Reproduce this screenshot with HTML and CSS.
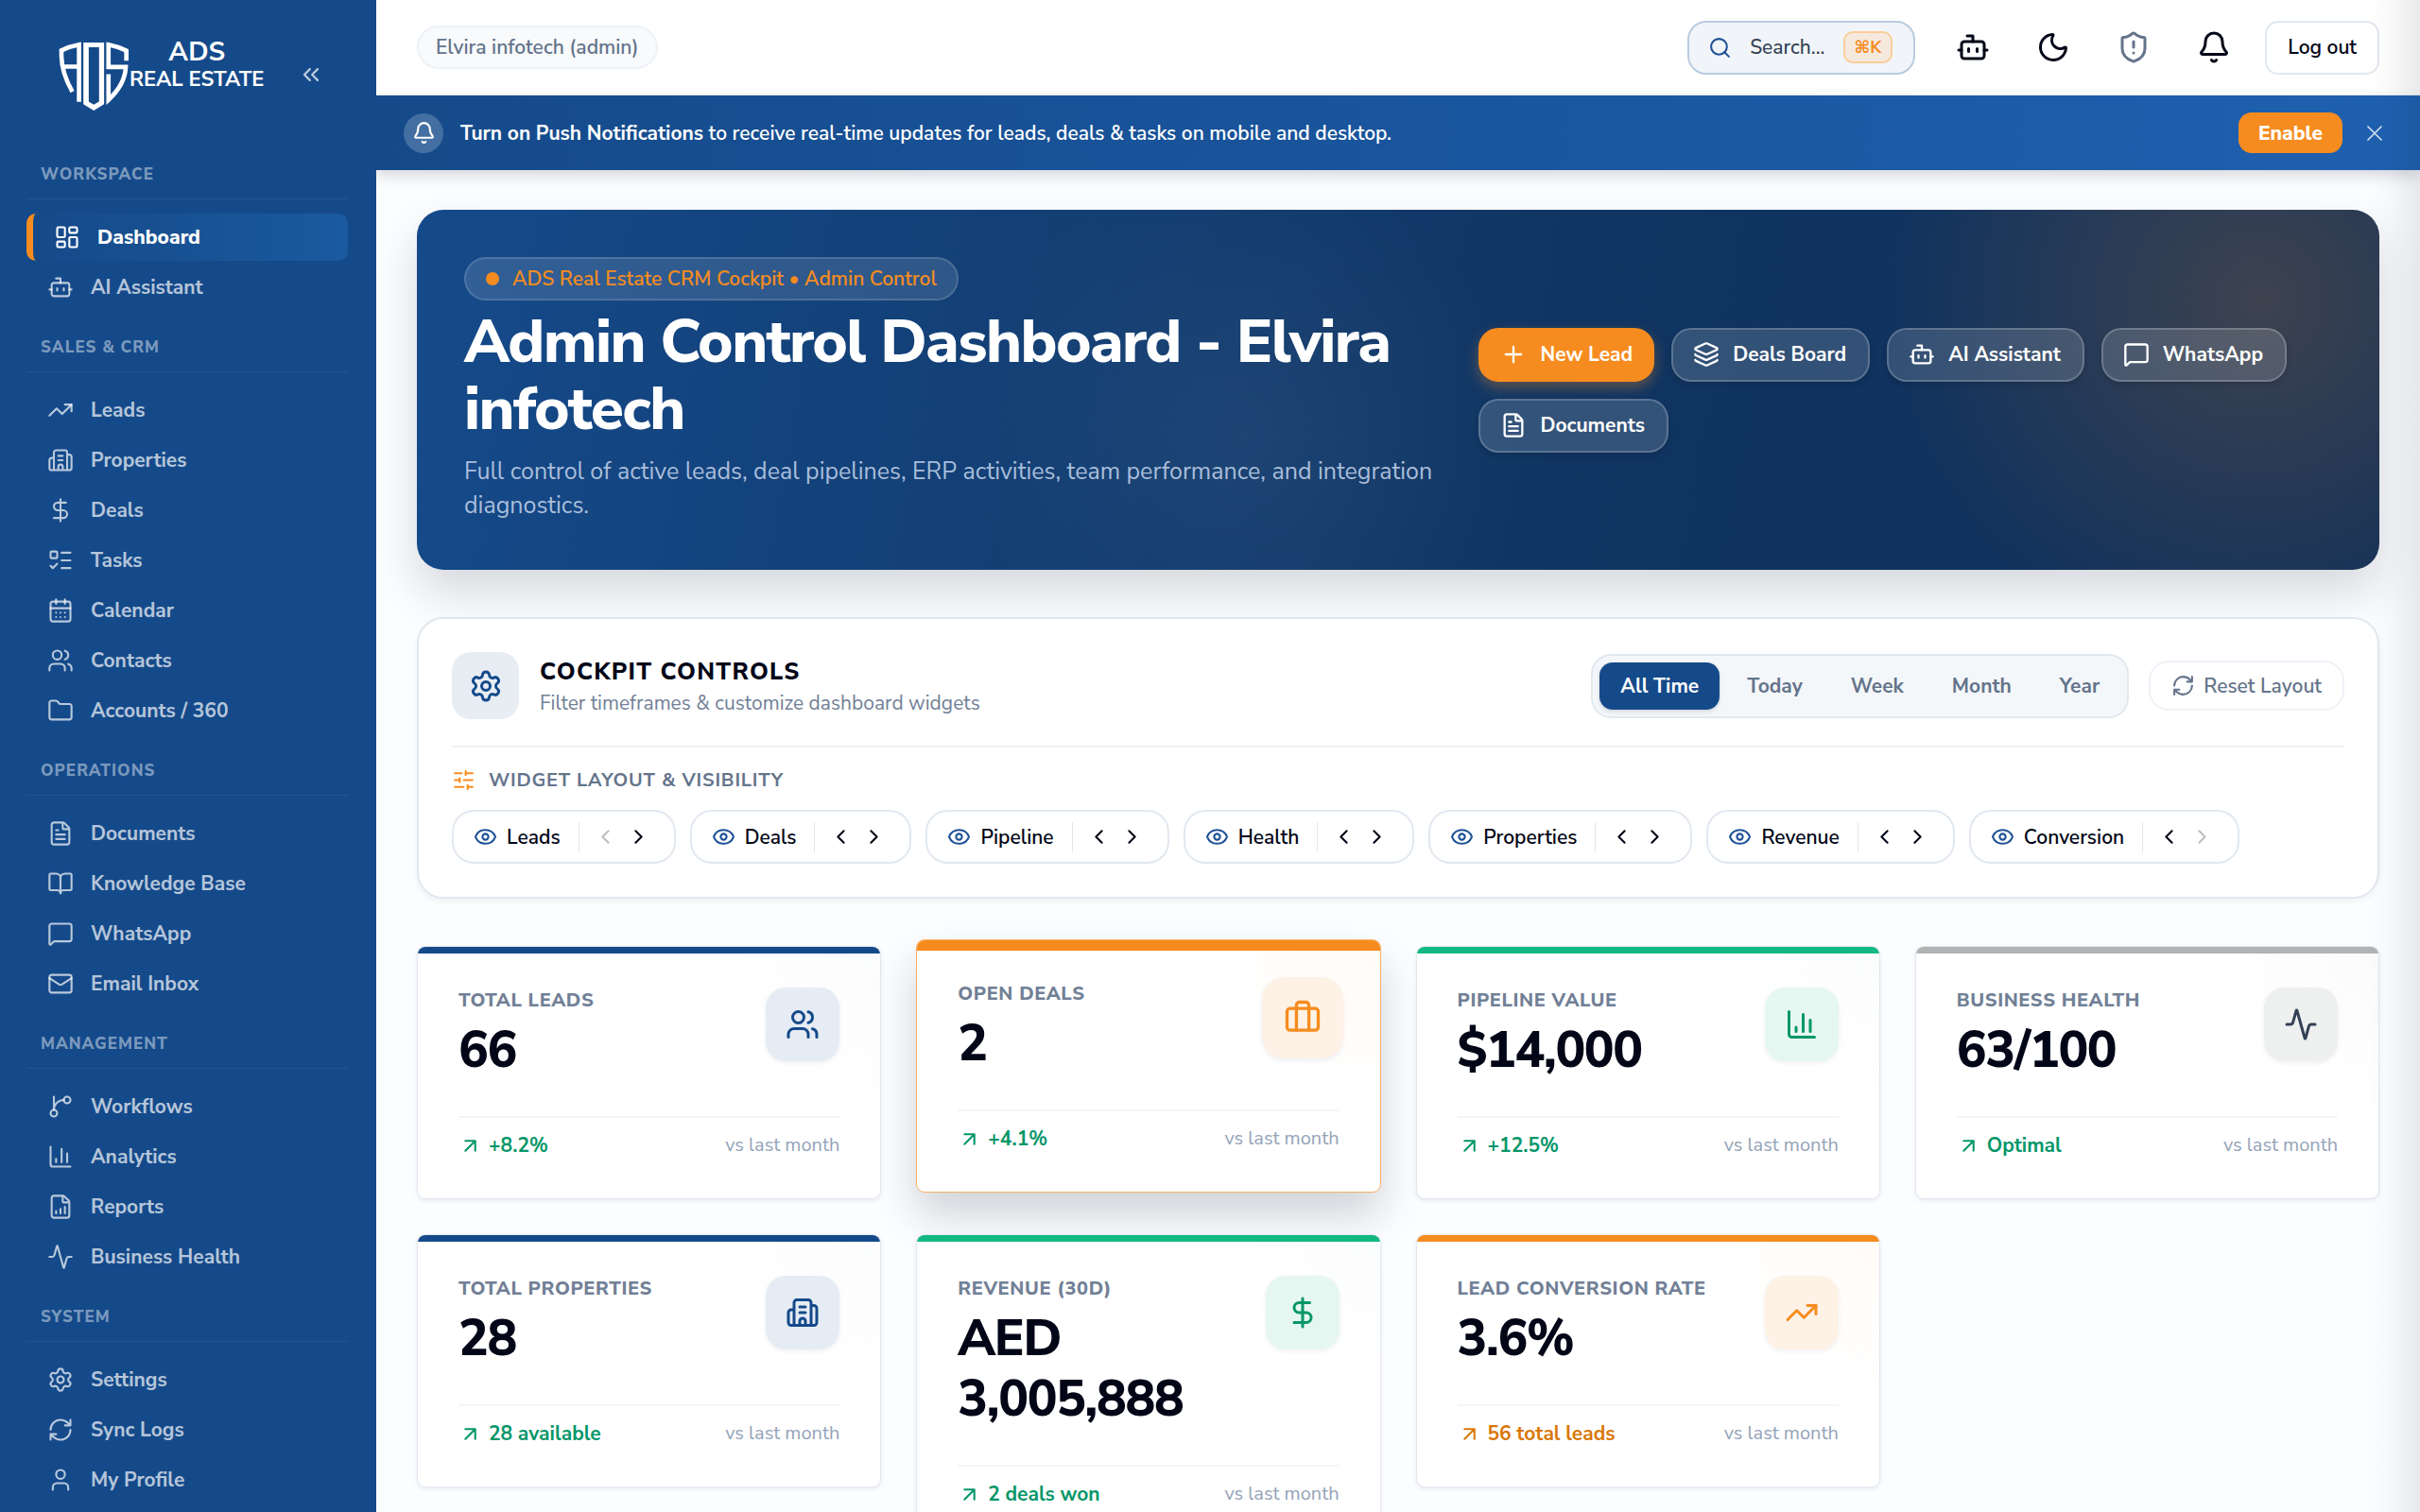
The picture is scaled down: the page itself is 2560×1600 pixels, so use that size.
FILE: index.html
```html
<!DOCTYPE html>
<html lang="en">
<head>
<meta charset="utf-8">
<meta name="viewport" content="width=device-width, initial-scale=1">
<title>ADS Real Estate CRM</title>
<link rel="stylesheet" href="styles.css">
</head>
<body>
<svg class="sprite" aria-hidden="true">
  <symbol id="i-dashboard" viewBox="0 0 24 24"><rect width="7" height="9" x="3" y="3" rx="1"/><rect width="7" height="5" x="14" y="3" rx="1"/><rect width="7" height="9" x="14" y="12" rx="1"/><rect width="7" height="5" x="3" y="16" rx="1"/></symbol>
  <symbol id="i-bot" viewBox="0 0 24 24"><path d="M12 8V4H8M2 14h2M20 14h2M15 13v2M9 13v2"/><rect width="16" height="12" x="4" y="8" rx="2"/></symbol>
  <symbol id="i-trend" viewBox="0 0 24 24"><path d="M16 7h6v6"/><path d="m22 7-8.5 8.5-5-5L2 17"/></symbol>
  <symbol id="i-building" viewBox="0 0 24 24"><path d="M10 12h4M10 8h4M14 21v-3a2 2 0 0 0-4 0v3M6 10H4a2 2 0 0 0-2 2v7a2 2 0 0 0 2 2h16a2 2 0 0 0 2-2V9a2 2 0 0 0-2-2h-2M6 21V5a2 2 0 0 1 2-2h8a2 2 0 0 1 2 2v16"/></symbol>
  <symbol id="i-dollar" viewBox="0 0 24 24"><path d="M12 2v20M17 5H9.500a3.500 3.500 0 0 0 0 7h5a3.500 3.500 0 0 1 0 7H6"/></symbol>
  <symbol id="i-tasks" viewBox="0 0 24 24"><rect x="3" y="4" width="6" height="6" rx="1"/><path d="m3 17 2 2 4-4M13 5h8M13 12h8M13 19h8"/></symbol>
  <symbol id="i-calendar" viewBox="0 0 24 24"><path d="M8 2v4M16 2v4M3 10h18M8 14h.01M12 14h.01M16 14h.01M8 18h.01M12 18h.01M16 18h.01"/><rect width="18" height="18" x="3" y="4" rx="2"/></symbol>
  <symbol id="i-users" viewBox="0 0 24 24"><path d="M16 21v-2a4 4 0 0 0-4-4H6a4 4 0 0 0-4 4v2M16 3.128a4 4 0 0 1 0 7.744M22 21v-2a4 4 0 0 0-3-3.870"/><circle cx="9" cy="7" r="4"/></symbol>
  <symbol id="i-folder" viewBox="0 0 24 24"><path d="M20 20a2 2 0 0 0 2-2V8a2 2 0 0 0-2-2h-7.900a2 2 0 0 1-1.690-.9L9.600 3.900A2 2 0 0 0 7.930 3H4a2 2 0 0 0-2 2v13a2 2 0 0 0 2 2Z"/></symbol>
  <symbol id="i-file" viewBox="0 0 24 24"><path d="M6 22a2 2 0 0 1-2-2V4a2 2 0 0 1 2-2h8a2.400 2.400 0 0 1 1.704.706l3.588 3.588A2.400 2.400 0 0 1 20 8v12a2 2 0 0 1-2 2zM14 2v5a1 1 0 0 0 1 1h5M10 9H8M16 13H8M16 17H8"/></symbol>
  <symbol id="i-book" viewBox="0 0 24 24"><path d="M12 7v14M3 18a1 1 0 0 1-1-1V4a1 1 0 0 1 1-1h5a4 4 0 0 1 4 4 4 4 0 0 1 4-4h5a1 1 0 0 1 1 1v13a1 1 0 0 1-1 1h-6a3 3 0 0 0-3 3 3 3 0 0 0-3-3z"/></symbol>
  <symbol id="i-message" viewBox="0 0 24 24"><path d="M22 17a2 2 0 0 1-2 2H6.828a2 2 0 0 0-1.414.586l-2.202 2.202A.71.71 0 0 1 2 21.286V5a2 2 0 0 1 2-2h16a2 2 0 0 1 2 2z"/></symbol>
  <symbol id="i-mail" viewBox="0 0 24 24"><path d="m22 7-8.991 5.727a2 2 0 0 1-2.009 0L2 7"/><rect x="2" y="4" width="20" height="16" rx="2"/></symbol>
  <symbol id="i-branch" viewBox="0 0 24 24"><path d="M15 6a9 9 0 0 0-9 9V3"/><circle cx="18" cy="6" r="3"/><circle cx="6" cy="18" r="3"/></symbol>
  <symbol id="i-chart" viewBox="0 0 24 24"><path d="M3 3v16a2 2 0 0 0 2 2h16M18 17V9M13 17V5M8 17v-3"/></symbol>
  <symbol id="i-report" viewBox="0 0 24 24"><path d="M6 22a2 2 0 0 1-2-2V4a2 2 0 0 1 2-2h8a2.400 2.400 0 0 1 1.704.706l3.588 3.588A2.400 2.400 0 0 1 20 8v12a2 2 0 0 1-2 2zM14 2v5a1 1 0 0 0 1 1h5M8 18v-2M12 18v-4M16 18v-6"/></symbol>
  <symbol id="i-activity" viewBox="0 0 24 24"><path d="M22 12h-2.480a2 2 0 0 0-1.930 1.460l-2.350 8.360a.25.25 0 0 1-.48 0L9.240 2.180a.25.25 0 0 0-.48 0l-2.350 8.360A2 2 0 0 1 4.490 12H2"/></symbol>
  <symbol id="i-settings" viewBox="0 0 24 24"><path d="M9.671 4.136a2.340 2.340 0 0 1 4.659 0 2.340 2.340 0 0 0 3.319 1.915 2.340 2.340 0 0 1 2.330 4.033 2.340 2.340 0 0 0 0 3.831 2.340 2.340 0 0 1-2.330 4.033 2.340 2.340 0 0 0-3.319 1.915 2.340 2.340 0 0 1-4.659 0 2.340 2.340 0 0 0-3.320-1.915 2.340 2.340 0 0 1-2.330-4.033 2.340 2.340 0 0 0 0-3.831A2.340 2.340 0 0 1 6.350 6.051a2.340 2.340 0 0 0 3.319-1.915"/><circle cx="12" cy="12" r="3"/></symbol>
  <symbol id="i-refresh" viewBox="0 0 24 24"><path d="M3 12a9 9 0 0 1 9-9 9.750 9.750 0 0 1 6.740 2.740L21 8M21 3v5h-5M21 12a9 9 0 0 1-9 9 9.750 9.750 0 0 1-6.740-2.740L3 16M8 16H3v5"/></symbol>
  <symbol id="i-user" viewBox="0 0 24 24"><path d="M19 21v-2a4 4 0 0 0-4-4H9a4 4 0 0 0-4 4v2"/><circle cx="12" cy="7" r="4"/></symbol>
  <symbol id="i-collapse" viewBox="0 0 24 24"><path d="m11 17-5-5 5-5M18 17l-5-5 5-5"/></symbol>
  <symbol id="i-search" viewBox="0 0 24 24"><path d="m21 21-4.340-4.340"/><circle cx="11" cy="11" r="8"/></symbol>
  <symbol id="i-moon" viewBox="0 0 24 24"><path d="M20.985 12.486a9 9 0 1 1-9.473-9.472c.405-.022.617.46.402.803a6 6 0 0 0 8.268 8.268c.344-.215.825-.004.803.401"/></symbol>
  <symbol id="i-shield" viewBox="0 0 24 24"><path d="M20 13c0 5-3.500 7.500-7.660 8.950a1 1 0 0 1-.67-.01C7.500 20.500 4 18 4 13V6a1 1 0 0 1 1-1c2 0 4.500-1.200 6.240-2.720a1.170 1.170 0 0 1 1.520 0C14.510 3.810 17 5 19 5a1 1 0 0 1 1 1zM12 8v4M12 16h.01"/></symbol>
  <symbol id="i-bell" viewBox="0 0 24 24"><path d="M10.268 21a2 2 0 0 0 3.464 0M3.262 15.326A1 1 0 0 0 4 17h16a1 1 0 0 0 .74-1.673C19.410 13.956 18 12.499 18 8A6 6 0 0 0 6 8c0 4.499-1.411 5.956-2.738 7.326"/></symbol>
  <symbol id="i-close" viewBox="0 0 24 24"><path d="M18 6 6 18M6 6l12 12"/></symbol>
  <symbol id="i-plus" viewBox="0 0 24 24"><path d="M5 12h14M12 5v14"/></symbol>
  <symbol id="i-layers" viewBox="0 0 24 24"><path d="M12.830 2.180a2 2 0 0 0-1.660 0L2.600 6.080a1 1 0 0 0 0 1.830l8.580 3.910a2 2 0 0 0 1.660 0l8.580-3.900a1 1 0 0 0 0-1.830zM2 12a1 1 0 0 0 .58.91l8.600 3.910a2 2 0 0 0 1.650 0l8.580-3.900A1 1 0 0 0 22 12M2 17a1 1 0 0 0 .58.91l8.600 3.910a2 2 0 0 0 1.650 0l8.580-3.900A1 1 0 0 0 22 17"/></symbol>
  <symbol id="i-sliders" viewBox="0 0 24 24"><path d="M10 5H3M12 19H3M14 3v4M16 17v4M21 12h-9M21 19h-5M21 5h-7M8 10v4M8 12H3"/></symbol>
  <symbol id="i-eye" viewBox="0 0 24 24"><path d="M2.062 12.348a1 1 0 0 1 0-.696 10.750 10.750 0 0 1 19.876 0 1 1 0 0 1 0 .696 10.750 10.750 0 0 1-19.876 0"/><circle cx="12" cy="12" r="3"/></symbol>
  <symbol id="i-left" viewBox="0 0 24 24"><path d="m15 18-6-6 6-6"/></symbol>
  <symbol id="i-right" viewBox="0 0 24 24"><path d="m9 18 6-6-6-6"/></symbol>
  <symbol id="i-case" viewBox="0 0 24 24"><path d="M16 20V4a2 2 0 0 0-2-2h-4a2 2 0 0 0-2 2v16"/><rect width="20" height="14" x="2" y="6" rx="2"/></symbol>
  <symbol id="i-up" viewBox="0 0 24 24"><path d="M7 7h10v10M7 17 17 7"/></symbol>
</svg>

<div class="app">
  <aside class="sidebar">
    <div class="brand">
      <a class="logo" href="#">
        <svg class="logo-mark" viewBox="36 54 226 220" aria-hidden="true">
          <path d="M80 214Q46 155 45 100V82Q70 70 101 64V246M46 134H100" fill="none" stroke="#fff" stroke-width="14"/>
          <path d="M115 57H181V254L148 274L115 254ZM132 72V245L148 255L165 245V72Z" fill="#fff" fill-rule="evenodd"/>
          <path d="M252 115V83Q225 70 195 64V135H250Q248 190 195 240V158" fill="none" stroke="#fff" stroke-width="14"/>
        </svg>
        <span class="logo-text"><span class="logo-top">ADS</span><span class="logo-bottom">REAL ESTATE</span></span>
      </a>
      <button class="collapse" aria-label="Collapse sidebar"><svg class="icon i28"><use href="#i-collapse"/></svg></button>
    </div>
    <nav class="nav" aria-label="Main">
      <section class="nav-group">
        <h2 class="nav-title">WORKSPACE</h2>
        <a class="nav-item active" href="#"><svg class="icon i28"><use href="#i-dashboard"/></svg>Dashboard</a>
        <a class="nav-item" href="#"><svg class="icon i28"><use href="#i-bot"/></svg>AI Assistant</a>
      </section>
      <section class="nav-group">
        <h2 class="nav-title">SALES &amp; CRM</h2>
        <a class="nav-item" href="#"><svg class="icon i28"><use href="#i-trend"/></svg>Leads</a>
        <a class="nav-item" href="#"><svg class="icon i28"><use href="#i-building"/></svg>Properties</a>
        <a class="nav-item" href="#"><svg class="icon i28"><use href="#i-dollar"/></svg>Deals</a>
        <a class="nav-item" href="#"><svg class="icon i28"><use href="#i-tasks"/></svg>Tasks</a>
        <a class="nav-item" href="#"><svg class="icon i28"><use href="#i-calendar"/></svg>Calendar</a>
        <a class="nav-item" href="#"><svg class="icon i28"><use href="#i-users"/></svg>Contacts</a>
        <a class="nav-item" href="#"><svg class="icon i28"><use href="#i-folder"/></svg>Accounts / 360</a>
      </section>
      <section class="nav-group">
        <h2 class="nav-title">OPERATIONS</h2>
        <a class="nav-item" href="#"><svg class="icon i28"><use href="#i-file"/></svg>Documents</a>
        <a class="nav-item" href="#"><svg class="icon i28"><use href="#i-book"/></svg>Knowledge Base</a>
        <a class="nav-item" href="#"><svg class="icon i28"><use href="#i-message"/></svg>WhatsApp</a>
        <a class="nav-item" href="#"><svg class="icon i28"><use href="#i-mail"/></svg>Email Inbox</a>
      </section>
      <section class="nav-group">
        <h2 class="nav-title">MANAGEMENT</h2>
        <a class="nav-item" href="#"><svg class="icon i28"><use href="#i-branch"/></svg>Workflows</a>
        <a class="nav-item" href="#"><svg class="icon i28"><use href="#i-chart"/></svg>Analytics</a>
        <a class="nav-item" href="#"><svg class="icon i28"><use href="#i-report"/></svg>Reports</a>
        <a class="nav-item" href="#"><svg class="icon i28"><use href="#i-activity"/></svg>Business Health</a>
      </section>
      <section class="nav-group">
        <h2 class="nav-title">SYSTEM</h2>
        <a class="nav-item" href="#"><svg class="icon i28"><use href="#i-settings"/></svg>Settings</a>
        <a class="nav-item" href="#"><svg class="icon i28"><use href="#i-refresh"/></svg>Sync Logs</a>
        <a class="nav-item" href="#"><svg class="icon i28"><use href="#i-user"/></svg>My Profile</a>
      </section>
    </nav>
  </aside>

  <div class="page">
    <header class="topbar">
      <span class="user-chip">Elvira infotech (admin)</span>
      <div class="tools">
        <button class="search"><svg class="icon i25"><use href="#i-search"/></svg><span>Search...</span><kbd>⌘K</kbd></button>
        <button class="tool" aria-label="AI Assistant"><svg class="icon i36"><use href="#i-bot"/></svg></button>
        <button class="tool" aria-label="Dark mode"><svg class="icon i36"><use href="#i-moon"/></svg></button>
        <button class="tool muted" aria-label="Security alerts"><svg class="icon i36"><use href="#i-shield"/></svg></button>
        <button class="tool" aria-label="Notifications"><svg class="icon i36"><use href="#i-bell"/></svg></button>
        <button class="logout">Log out</button>
      </div>
    </header>

    <div class="banner" role="status">
      <span class="banner-icon"><svg class="icon i25"><use href="#i-bell"/></svg></span>
      <p><strong>Turn on Push Notifications</strong> to receive real-time updates for leads, deals &amp; tasks on mobile and desktop.</p>
      <button class="enable">Enable</button>
      <button class="dismiss" aria-label="Dismiss"><svg class="icon i28"><use href="#i-close"/></svg></button>
    </div>

    <main class="content">
      <section class="hero">
        <div class="hero-copy">
          <span class="hero-badge"><span class="dot"></span>ADS Real Estate CRM Cockpit • Admin Control</span>
          <h1>Admin Control Dashboard - Elvira infotech</h1>
          <p>Full control of active leads, deal pipelines, ERP activities, team performance, and integration diagnostics.</p>
        </div>
        <div class="hero-actions">
          <button class="action primary"><svg class="icon i28"><use href="#i-plus"/></svg>New Lead</button>
          <button class="action"><svg class="icon i28"><use href="#i-layers"/></svg>Deals Board</button>
          <button class="action"><svg class="icon i28"><use href="#i-bot"/></svg>AI Assistant</button>
          <button class="action"><svg class="icon i28"><use href="#i-message"/></svg>WhatsApp</button>
          <button class="action"><svg class="icon i28"><use href="#i-file"/></svg>Documents</button>
        </div>
      </section>

      <section class="controls">
        <div class="controls-head">
          <span class="controls-icon"><svg class="icon i36"><use href="#i-settings"/></svg></span>
          <div class="controls-text">
            <h2>COCKPIT CONTROLS</h2>
            <p>Filter timeframes &amp; customize dashboard widgets</p>
          </div>
          <div class="tabs">
            <button class="tab active">All Time</button>
            <button class="tab">Today</button>
            <button class="tab">Week</button>
            <button class="tab">Month</button>
            <button class="tab">Year</button>
          </div>
          <button class="reset"><svg class="icon i25"><use href="#i-refresh"/></svg>Reset Layout</button>
        </div>
        <h3 class="widgets-title"><svg class="icon i25"><use href="#i-sliders"/></svg>WIDGET LAYOUT &amp; VISIBILITY</h3>
        <div class="chips">
          <div class="chip"><button class="toggle"><svg class="icon i25"><use href="#i-eye"/></svg>Leads</button><button class="move" aria-label="Move left" disabled><svg class="icon i25"><use href="#i-left"/></svg></button><button class="move" aria-label="Move right"><svg class="icon i25"><use href="#i-right"/></svg></button></div>
          <div class="chip"><button class="toggle"><svg class="icon i25"><use href="#i-eye"/></svg>Deals</button><button class="move" aria-label="Move left"><svg class="icon i25"><use href="#i-left"/></svg></button><button class="move" aria-label="Move right"><svg class="icon i25"><use href="#i-right"/></svg></button></div>
          <div class="chip"><button class="toggle"><svg class="icon i25"><use href="#i-eye"/></svg>Pipeline</button><button class="move" aria-label="Move left"><svg class="icon i25"><use href="#i-left"/></svg></button><button class="move" aria-label="Move right"><svg class="icon i25"><use href="#i-right"/></svg></button></div>
          <div class="chip"><button class="toggle"><svg class="icon i25"><use href="#i-eye"/></svg>Health</button><button class="move" aria-label="Move left"><svg class="icon i25"><use href="#i-left"/></svg></button><button class="move" aria-label="Move right"><svg class="icon i25"><use href="#i-right"/></svg></button></div>
          <div class="chip"><button class="toggle"><svg class="icon i25"><use href="#i-eye"/></svg>Properties</button><button class="move" aria-label="Move left"><svg class="icon i25"><use href="#i-left"/></svg></button><button class="move" aria-label="Move right"><svg class="icon i25"><use href="#i-right"/></svg></button></div>
          <div class="chip"><button class="toggle"><svg class="icon i25"><use href="#i-eye"/></svg>Revenue</button><button class="move" aria-label="Move left"><svg class="icon i25"><use href="#i-left"/></svg></button><button class="move" aria-label="Move right"><svg class="icon i25"><use href="#i-right"/></svg></button></div>
          <div class="chip"><button class="toggle"><svg class="icon i25"><use href="#i-eye"/></svg>Conversion</button><button class="move" aria-label="Move left"><svg class="icon i25"><use href="#i-left"/></svg></button><button class="move" aria-label="Move right" disabled><svg class="icon i25"><use href="#i-right"/></svg></button></div>
        </div>
      </section>

      <section class="stats">
        <article class="stat blue">
          <div class="stat-top"><div><h3>TOTAL LEADS</h3><p class="value">66</p></div><span class="stat-icon"><svg class="icon i36"><use href="#i-users"/></svg></span></div>
          <div class="stat-foot"><span class="delta"><svg class="icon i25"><use href="#i-up"/></svg>+8.2%</span><span class="versus">vs last month</span></div>
        </article>
        <article class="stat orange raised">
          <div class="stat-top"><div><h3>OPEN DEALS</h3><p class="value">2</p></div><span class="stat-icon"><svg class="icon i36"><use href="#i-case"/></svg></span></div>
          <div class="stat-foot"><span class="delta"><svg class="icon i25"><use href="#i-up"/></svg>+4.1%</span><span class="versus">vs last month</span></div>
        </article>
        <article class="stat green">
          <div class="stat-top"><div><h3>PIPELINE VALUE</h3><p class="value">$14,000</p></div><span class="stat-icon"><svg class="icon i36"><use href="#i-chart"/></svg></span></div>
          <div class="stat-foot"><span class="delta"><svg class="icon i25"><use href="#i-up"/></svg>+12.5%</span><span class="versus">vs last month</span></div>
        </article>
        <article class="stat gray">
          <div class="stat-top"><div><h3>BUSINESS HEALTH</h3><p class="value">63/100</p></div><span class="stat-icon"><svg class="icon i36"><use href="#i-activity"/></svg></span></div>
          <div class="stat-foot"><span class="delta"><svg class="icon i25"><use href="#i-up"/></svg>Optimal</span><span class="versus">vs last month</span></div>
        </article>
        <article class="stat blue">
          <div class="stat-top"><div><h3>TOTAL PROPERTIES</h3><p class="value">28</p></div><span class="stat-icon"><svg class="icon i36"><use href="#i-building"/></svg></span></div>
          <div class="stat-foot"><span class="delta"><svg class="icon i25"><use href="#i-up"/></svg>28 available</span><span class="versus">vs last month</span></div>
        </article>
        <article class="stat green">
          <div class="stat-top"><div><h3>REVENUE (30D)</h3><p class="value">AED 3,005,888</p></div><span class="stat-icon"><svg class="icon i36"><use href="#i-dollar"/></svg></span></div>
          <div class="stat-foot"><span class="delta"><svg class="icon i25"><use href="#i-up"/></svg>2 deals won</span><span class="versus">vs last month</span></div>
        </article>
        <article class="stat orange">
          <div class="stat-top"><div><h3>LEAD CONVERSION RATE</h3><p class="value">3.6%</p></div><span class="stat-icon"><svg class="icon i36"><use href="#i-trend"/></svg></span></div>
          <div class="stat-foot"><span class="delta warn"><svg class="icon i25"><use href="#i-up"/></svg>56 total leads</span><span class="versus">vs last month</span></div>
        </article>
      </section>
    </main>
    <div class="edge-shade"></div>
  </div>
</div>
</body>
</html>
```
FILE: styles.css
```css
:root {
  --brand: #154a8a;
  --orange: #f68c1f;
  --ink: #020617;
  --muted: #64748b;
  --line: #e2e8f0;
}

* { box-sizing: border-box; }

body {
  margin: 0;
  font: 400 21px/28px "Nunito Sans", Nunito, "Open Sans", sans-serif;
  color: var(--ink);
  background: #fcfdff;
}

h1, h2, h3, p { margin: 0; }
a { color: inherit; text-decoration: none; }
button { font: inherit; color: inherit; background: none; border: 0; padding: 0; cursor: pointer; }

.sprite { display: none; }
.icon { flex: none; fill: none; stroke: currentColor; stroke-width: 2; stroke-linecap: round; stroke-linejoin: round; }
.i25 { width: 25px; height: 25px; }
.i28 { width: 28px; height: 28px; }
.i36 { width: 36px; height: 36px; }

.app { display: flex; height: 100vh; }

/* Sidebar */
.sidebar { flex: 0 0 398px; overflow: hidden; color: #fff; background: var(--brand); }
.brand { display: flex; align-items: center; justify-content: space-between; padding: 41px 55px 57px 62px; }
.logo { display: flex; align-items: flex-start; }
.logo-mark { width: 75px; height: 73px; margin-top: 3px; }
.logo-text { display: flex; flex-direction: column; align-items: center; font-weight: 700; white-space: nowrap; }
.logo-top { font-size: 28px; line-height: 28px; }
.logo-bottom { font-size: 22px; line-height: 30px; }
.collapse { display: flex; color: rgba(255, 255, 255, .7); }
.nav { padding: 0 30px 0 28px; }
.nav-group { display: flex; flex-direction: column; gap: 3px; padding-bottom: 28px; }
.nav-title {
  margin-bottom: 12px;
  padding: 0 15px 14px;
  border-bottom: 1px solid rgba(255, 255, 255, .06);
  font-size: 17px;
  line-height: 22px;
  font-weight: 800;
  letter-spacing: .06em;
  color: rgba(255, 255, 255, .45);
}
.nav-item {
  display: flex;
  align-items: center;
  gap: 18px;
  height: 50px;
  padding: 0 22px;
  border-radius: 10px;
  font-weight: 700;
  color: rgba(255, 255, 255, .7);
}
.nav-item .icon { stroke-width: 1.8; }
.nav-item.active {
  border-left: 7px solid var(--orange);
  color: #fff;
  background: linear-gradient(90deg, #154a8a, #1a5a9e);
  font-weight: 800;
}

/* Top bar */
.page { position: relative; flex: 1; min-width: 0; overflow: hidden; }
.topbar {
  display: flex;
  align-items: center;
  justify-content: space-between;
  height: 101px;
  padding: 0 43px;
  border-bottom: 1px solid #f1f5f9;
  background: #fff;
}
.user-chip {
  padding: 7px 18px;
  border: 2px solid #eef2f7;
  border-radius: 23px;
  background: #f8fafc;
  font-weight: 600;
  color: var(--muted);
}
.tools { display: flex; align-items: center; }
.search {
  display: flex;
  align-items: center;
  gap: 19px;
  height: 57px;
  margin-right: 32px;
  padding: 0 22px 0 20px;
  border: 2px solid #b9cbe0;
  border-radius: 20px;
  background: #f1f5f9;
  color: #334155;
  font-weight: 500;
}
.search .icon { color: #1d5196; }
.search kbd {
  padding: 2px 10px;
  border: 2px solid #fbcd9a;
  border-radius: 10px;
  background: #f5e9de;
  color: var(--orange);
  font: 700 18px/26px "Nunito Sans", Nunito, "DejaVu Sans", sans-serif;
}
.tool { display: grid; place-items: center; width: 57px; height: 57px; margin-right: 28px; }
.tool:nth-of-type(5) { margin-right: 26px; }
.tool.muted { color: var(--muted); }
.logout { height: 57px; padding: 0 22px; border: 2px solid var(--line); border-radius: 14px; background: #fff; font-weight: 600; }

/* Push banner */
.banner {
  position: relative;
  display: flex;
  align-items: center;
  height: 79px;
  padding: 0 34px 0 29px;
  color: #fff;
  background: linear-gradient(90deg, #154a8a, #1e60b0);
  box-shadow: 0 6px 14px rgba(15, 23, 42, .16);
}
.banner-icon { display: grid; place-items: center; width: 42px; height: 42px; margin-right: 18px; border-radius: 50%; background: rgba(255, 255, 255, .2); }
.banner p { flex: 1; font-weight: 600; }
.banner strong { font-weight: 700; }
.enable { height: 43px; padding: 0 21px; border-radius: 14px; background: var(--orange); font-weight: 800; }
.dismiss { display: flex; margin-left: 20px; color: rgba(255, 255, 255, .8); }
.dismiss .icon { stroke-width: 1.5; }

.content { display: flex; flex-direction: column; gap: 50px; padding: 42px 43px; }

/* Hero */
.hero {
  display: grid;
  grid-template-columns: 8fr 7fr;
  align-items: center;
  gap: 42px;
  padding: 50px;
  border-radius: 28px;
  color: #fff;
  background:
    radial-gradient(circle 400px at 94% 25%, rgba(246, 140, 31, .2), transparent),
    radial-gradient(circle 300px at 42% 62%, rgba(255, 255, 255, .05), transparent),
    linear-gradient(100deg, #154a8a 0%, #103562 58%, #0f2f5a 100%);
  box-shadow: 0 24px 48px rgba(15, 23, 42, .16);
}
.hero-copy { display: flex; flex-direction: column; align-items: flex-start; }
.hero-badge {
  display: flex;
  align-items: center;
  gap: 14px;
  padding: 7px 21px;
  border: 2px solid rgba(255, 255, 255, .14);
  border-radius: 23px;
  background: rgba(255, 255, 255, .12);
  font-weight: 600;
  color: var(--orange);
}
.dot { width: 14px; height: 14px; border-radius: 50%; background: var(--orange); }
.hero h1 { margin-top: 9px; font-size: 64px; line-height: 71px; font-weight: 800; letter-spacing: -.025em; }
.hero-copy p { margin-top: 12px; font-size: 25px; line-height: 36px; color: #a9bedb; }
.hero-actions { display: flex; flex-wrap: wrap; gap: 18px; }
.action {
  display: flex;
  align-items: center;
  gap: 14px;
  height: 57px;
  padding: 0 23px 0 21px;
  border: 2px solid rgba(255, 255, 255, .2);
  border-radius: 21px;
  background: rgba(255, 255, 255, .15);
  box-shadow: 0 3px 6px rgba(0, 0, 0, .15);
  font-weight: 700;
}
.action.primary { padding: 0 21px; border-color: var(--orange); background: var(--orange); box-shadow: 0 6px 14px rgba(246, 140, 31, .35); }

/* Cockpit controls */
.controls {
  padding: 35px;
  border: 2px solid var(--line);
  border-radius: 28px;
  background: #fff;
  box-shadow: 0 3px 6px rgba(15, 23, 42, .05);
}
.controls-head { display: flex; align-items: center; padding-bottom: 28px; border-bottom: 2px solid #eef2f7; }
.controls-icon { display: grid; place-items: center; width: 71px; height: 71px; margin-right: 22px; border-radius: 20px; color: var(--brand); background: #e8edf4; }
.controls-text { flex: 1; }
.controls h2 { font-size: 25px; line-height: 36px; font-weight: 800; letter-spacing: .05em; }
.controls-text p { line-height: 30px; color: #718096; }
.tabs { display: flex; gap: 7px; margin-right: 21px; padding: 7px; border: 2px solid var(--line); border-radius: 21px; background: #f4f7fa; }
.tab { height: 50px; padding: 0 22px; border-radius: 14px; font-weight: 700; color: var(--muted); }
.tab.active { color: #fff; background: var(--brand); box-shadow: 0 2px 4px rgba(15, 23, 42, .15); }
.reset { display: flex; align-items: center; gap: 9px; height: 53px; padding: 0 22px; border: 2px solid #eef2f7; border-radius: 21px; color: var(--muted); font-weight: 600; }
.widgets-title { display: flex; align-items: center; gap: 14px; margin: 21px 0 18px; font-size: 20px; line-height: 27px; font-weight: 700; letter-spacing: .04em; color: var(--muted); }
.widgets-title .icon { color: var(--orange); }
.chips { display: flex; flex-wrap: wrap; gap: 15px; }
.chip { display: flex; align-items: center; height: 57px; padding: 0 20px 0 21px; border: 2px solid var(--line); border-radius: 23px; background: #fff; }
.toggle { display: flex; align-items: center; gap: 10px; height: 32px; margin-right: 10px; padding-right: 19px; border-right: 1px solid var(--line); font-weight: 600; }
.toggle .icon { color: #1d5196; }
.move { display: grid; place-items: center; width: 35px; height: 35px; }
.move:disabled { opacity: .25; color: inherit; }

/* Stat cards */
.stats { display: grid; grid-template-columns: repeat(4, 1fr); align-items: start; gap: 37px; }
.stat {
  position: relative;
  overflow: hidden;
  padding: 43px 43px 42px;
  border: 1px solid var(--line);
  border-radius: 9px;
  background: radial-gradient(circle 170px at 100% 0, var(--tint), transparent), #fff;
  box-shadow: 0 2px 5px rgba(15, 23, 42, .08);
}
.stat::before { content: ""; position: absolute; inset: 0 0 auto; height: 7px; background: var(--strip); }
.stat.blue { --strip: #154a8a; --tint: #fbfcfd; --soft: #e6ecf4; --tone: #154a8a; }
.stat.orange { --strip: #f68c1f; --tint: #fffbf7; --soft: #fef1e5; --tone: #f68c1f; }
.stat.green { --strip: #11b981; --tint: #fbfdfc; --soft: #e6f7f1; --tone: #059669; }
.stat.gray { --strip: #b1b3b3; --tint: #fbfbfb; --soft: #eef0f0; --tone: #334155; }
.stat-top { display: flex; justify-content: space-between; }
.stat h3 { font-size: 20px; line-height: 28px; font-weight: 800; letter-spacing: .03em; color: #718096; }
.value { margin-top: 7px; font-size: 53px; line-height: 64px; font-weight: 800; letter-spacing: -.025em; }
.stat-icon { flex: none; display: grid; place-items: center; width: 78px; height: 78px; border-radius: 21px; color: var(--tone); background: var(--soft); box-shadow: 0 2px 5px rgba(15, 23, 42, .06); }
.stat-foot { display: flex; align-items: center; justify-content: space-between; margin-top: 37px; padding-top: 15px; border-top: 2px solid #f3f5f7; }
.delta { display: flex; align-items: center; gap: 7px; font-weight: 700; color: #059669; }
.delta.warn { color: #d97706; }
.versus { font-size: 20px; color: #94a3b8; }
.stat.raised { border-color: #f9b066; transform: translateY(-7px); box-shadow: 0 24px 44px rgba(15, 23, 42, .18); }
.stat.raised::before { height: 11px; }
.stat.raised .stat-icon { transform: scale(1.1); }

/* Soft shade along the window's right edge */
.edge-shade { position: absolute; inset: 0 0 0 auto; width: 56px; pointer-events: none; background: linear-gradient(270deg, rgba(15, 23, 42, .09), rgba(15, 23, 42, .02) 60%, transparent); }
```
